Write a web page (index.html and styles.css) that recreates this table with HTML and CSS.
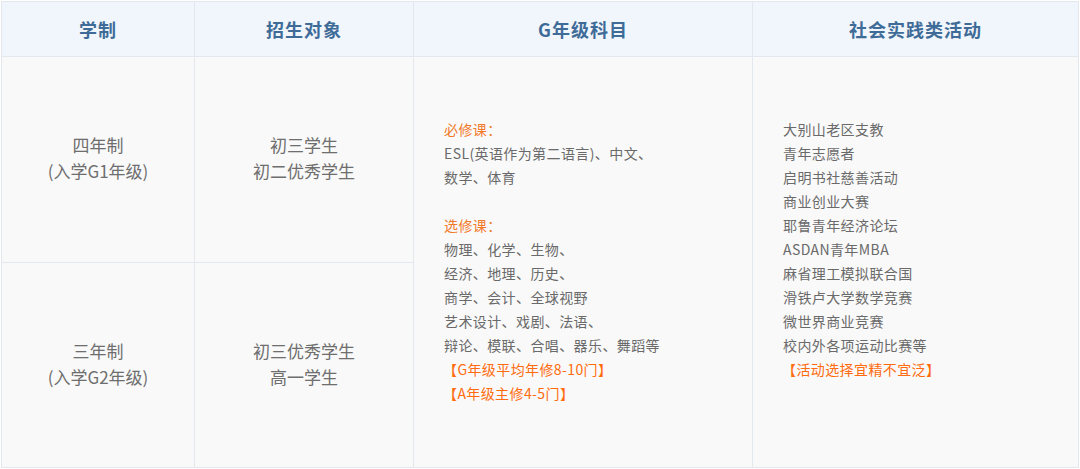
FILE: index.html
```html
<!DOCTYPE html>
<html lang="zh">
<head>
<meta charset="utf-8">
<link rel="stylesheet" href="styles.css">
</head>
<body>
<div class="wrap">
<table class="grid">
  <colgroup>
    <col class="c1"><col class="c2"><col class="c3"><col class="c4">
  </colgroup>
  <thead>
    <tr class="head">
      <th>学制</th>
      <th>招生对象</th>
      <th>G年级科目</th>
      <th>社会实践类活动</th>
    </tr>
  </thead>
  <tbody>
    <tr class="row1">
      <td class="mid">四年制<br>(入学G1年级)</td>
      <td class="mid">初三学生<br>初二优秀学生</td>
      <td class="list" rowspan="2">
        <div class="orange">必修课：</div>
        <div>ESL(英语作为第二语言)、中文、</div>
        <div>数学、体育</div>
        <div class="blank">&nbsp;</div>
        <div class="orange">选修课：</div>
        <div>物理、化学、生物、</div>
        <div>经济、地理、历史、</div>
        <div>商学、会计、全球视野</div>
        <div>艺术设计、戏剧、法语、</div>
        <div>辩论、模联、合唱、器乐、舞蹈等</div>
        <div class="hot">【G年级平均年修8-10门】</div>
        <div class="hot">【A年级主修4-5门】</div>
      </td>
      <td class="list" rowspan="2">
        <div>大别山老区支教</div>
        <div>青年志愿者</div>
        <div>启明书社慈善活动</div>
        <div>商业创业大赛</div>
        <div>耶鲁青年经济论坛</div>
        <div>ASDAN青年MBA</div>
        <div>麻省理工模拟联合国</div>
        <div>滑铁卢大学数学竞赛</div>
        <div>微世界商业竞赛</div>
        <div>校内外各项运动比赛等</div>
        <div class="hot">【活动选择宜精不宜泛】</div>
        <div class="blank">&nbsp;</div>
      </td>
    </tr>
    <tr class="row2">
      <td class="mid">三年制<br>(入学G2年级)</td>
      <td class="mid">初三优秀学生<br>高一学生</td>
    </tr>
  </tbody>
</table>
</div>
</body>
</html>
```

FILE: styles.css
```css
html, body {
  margin: 0;
  padding: 0;
  background: #ffffff;
}

.wrap {
  padding: 1px 0 0 1px;
}

.grid {
  width: 1077px;
  border-collapse: collapse;
  table-layout: fixed;
  font-family: "Noto Sans CJK SC", "Noto Sans", sans-serif;
}

.c1 { width: 193px; }
.c2 { width: 219px; }
.c3 { width: 339px; }
.c4 { width: 326px; }

.grid th,
.grid td {
  border: 1px solid #e3e8ef;
  padding: 0;
}

.head th {
  height: 54px;
  background: #f0f6fb;
  color: #3f6b98;
  font-size: 18px;
  font-weight: bold;
  letter-spacing: 1px;
  text-align: center;
  vertical-align: middle;
}

.grid td {
  background: #f9f9f9;
}

.row1 td.mid { height: 202px; }
.row2 td.mid { height: 201px; }

.mid {
  text-align: center;
  vertical-align: middle;
  color: #6e6e6e;
  font-size: 17px;
  line-height: 26px;
  padding-bottom: 3px !important;
}

.list {
  vertical-align: middle;
  text-align: left;
  padding-left: 30px !important;
  padding-bottom: 2px !important;
  color: #6a6a6a;
  font-size: 14px;
  letter-spacing: 0.4px;
  line-height: 24px;
}

.orange {
  color: #f07a2a;
}

.hot {
  color: #ff6b0d;
  margin-left: -1px;
}
```
